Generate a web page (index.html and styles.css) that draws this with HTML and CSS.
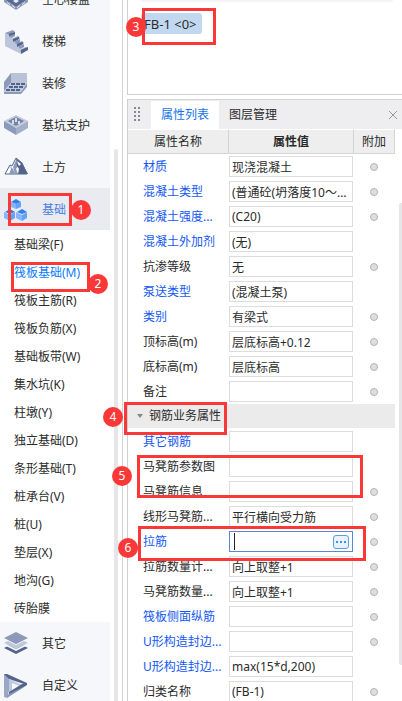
FILE: index.html
```
<!DOCTYPE html>
<html lang="zh-CN">
<head>
  <meta charset="UTF-8" />
  <meta name="viewport" content="width=device-width, initial-scale=1.0" />
  <title>属性列表</title>
  <link rel="stylesheet" href="styles.css">
</head>
<body>
  <div class="app">
    <nav class="sidebar">
      <div class="nav-list">
        <button class="nav-item">
          <svg class="icon" viewBox="0 0 24 24"><path fill="#8c9aba" d="M0 11l12 8 12-8v3l-12 8-12-8z"/><path fill="#5a6c94" d="M12 3l12 8-12 8-12-8z"/><path fill="#e6eaf2" d="M12 5l3 2-3 2-3-2zM7 8l3 2-3 2-3-2zM17 8l3 2-3 2-3-2zM12 11l3 2-3 2-3-2zM3 14l3 2v1l-3-2zM8 17l3 2v1l-3-2zM21 14l-3 2v1l3-2zM16 17l-3 2v1l3-2z"/></svg>
          空心楼盖
        </button>
        <button class="nav-item">
          <svg class="icon" viewBox="0 0 24 24"><path fill="#bcc5d9" d="M1 3l4 2 4 4 4 3 3 4 1 8L1 16z"/><path fill="#8c9aba" d="M1 3l8-3 2 2-6 3zM5 5l6-2v3L8 8 5 7zM8 9l6-3 2 2-5 3zM11 11l5-2v3l-3 2-2-1zM12 14l6-3 2 2-5 3zM15 16l5-2v3l-3 2-2-1zM16 20l6-3 2 2-7 3z"/><path fill="#52648c" d="M5 4l6-2v2L5 6zM9 9l6-2v2l-6 3zM13 14l6-2v2l-6 3zM17 20l7-3v3l-7 4z"/></svg>
          楼梯
        </button>
        <button class="nav-item">
          <svg class="icon" viewBox="0 0 24 24"><path fill="#b9c2d7" d="M7 1h16v10H7z"/><path fill="#8c9aba" d="M7 1v10L0 19v-9z"/><path fill="#c0c8db" d="M7 11h16l-6 9H0v-1z"/><path fill="#8c9aba" d="M23 11v4l-6 7H0v-2h17z"/><path stroke="#52648c" stroke-width="2" stroke-dasharray="4 1" d="M7 12h14M5 15h14M2 18h15"/></svg>
          装修
        </button>
        <button class="nav-item">
          <svg class="icon" viewBox="0 0 24 24"><path fill="#c3cadc" d="M12 1l12 6-12 7L0 7z"/><path fill="#8c9aba" d="M0 7l12 7v7L0 14z"/><path fill="#a4afc9" d="M24 7l-12 7v7l12-7z"/><path fill="#7484a9" d="M12 3l8 4-8 5-8-5z"/><path stroke="#d7dce8" stroke-width="2" d="M9 6v4M12 4v4M15 7v3"/></svg>
          基坑支护
        </button>
        <button class="nav-item">
          <svg class="icon" viewBox="0 0 24 24"><path fill="#fff" stroke="#52648c" d="M1 18l5-9 2 1 4-8 6 5 5 11z"/><path fill="#8c9aba" d="M6 10l3 3 2 5H5l2-5zM12 4l2 6-2 3 2 5h-3l-2-7z"/><path fill="#52648c" d="M12 2l6 5 6 11H14l1-5-2-3z"/><path fill="#fff" d="M13 5l4 3-2 2-1-2z"/></svg>
          土方
        </button>
        <button class="nav-item active">
          <svg class="icon" viewBox="0 0 24 24"><path fill="#2f7ff2" d="M12 1l5 3-5 2-5-2z"/><path fill="#83b6ff" d="M7 4l5 2v5l-5-2z"/><path fill="#64a2fb" d="M17 4l-5 2v5l5-2z"/><path fill="#2f7ff2" d="M6 11l5 3-5 2-5-2z"/><path fill="#83b6ff" d="M0 14l6 3v6l-6-3z"/><path fill="#64a2fb" d="M11 14l-5 3v6l5-3z"/><path fill="#2f7ff2" d="M18 11l5 3-5 2-5-2z"/><path fill="#83b6ff" d="M12 14l6 3v6l-6-3z"/><path fill="#64a2fb" d="M23 14l-5 3v6l5-3z"/></svg>
          基础
        </button>
        <div class="sub-list">
          <button class="sub-item">基础梁(F)</button>
          <button class="sub-item selected">筏板基础(M)</button>
          <button class="sub-item">筏板主筋(R)</button>
          <button class="sub-item">筏板负筋(X)</button>
          <button class="sub-item">基础板带(W)</button>
          <button class="sub-item">集水坑(K)</button>
          <button class="sub-item">柱墩(Y)</button>
          <button class="sub-item">独立基础(D)</button>
          <button class="sub-item">条形基础(T)</button>
          <button class="sub-item">桩承台(V)</button>
          <button class="sub-item">桩(U)</button>
          <button class="sub-item">垫层(X)</button>
          <button class="sub-item">地沟(G)</button>
          <button class="sub-item">砖胎膜</button>
        </div>
        <button class="nav-item">
          <svg class="icon" viewBox="0 0 24 24"><path fill="#52648c" d="M12 10l12 6-12 6-12-6z"/><path fill="#f5f7fa" d="M0 11l12 6 12-6v2l-12 6-12-6z"/><path fill="#c0c8db" d="M12 5l12 6-12 6-12-6z"/><path fill="#f5f7fa" d="M0 6l12 6 12-6v1l-12 6-12-6z"/><path fill="#8c9aba" d="M12 0l12 6-12 6L0 6z"/></svg>
          其它
        </button>
        <button class="nav-item">
          <svg class="icon" viewBox="0 0 24 24"><path fill="#9ba8c5" d="M0 0l5 2v15l-2 7-3-1z"/><path fill="#52648c" d="M0 0h3l20 9v2L5 5z"/><path fill="#c0c8db" d="M5 5l13 6-2 1L8 9v9l-3 2z"/><path fill="#52648c" d="M23 9v2L7 21l-2-1v-2l13-8z"/><path fill="#8c9aba" d="M23 11L3 24v-3l4-2z"/></svg>
          自定义
        </button>
      </div>
    </nav>

    <div class="gutter"><span class="gutter-thumb"></span></div>

    <main class="main">
      <section class="components">
        <div class="search-edge"></div>
        <button class="chip">FB-1 &lt;0&gt;</button>
      </section>

      <section class="props">
        <div class="tab-bar">
          <span class="grip"></span>
          <button class="tab current">属性列表</button>
          <button class="tab">图层管理</button>
          <button class="close" aria-label="关闭">
            <svg viewBox="0 0 10 10" width="10" height="10"><path stroke="#999" d="M1 1l8 8M9 1L1 9"/></svg>
          </button>
        </div>
        <div class="props-body">
          <div class="table-wrap">
            <table class="prop-table">
              <thead>
                <tr><th class="col-name">属性名称</th><th class="col-value">属性值</th><th class="col-extra">附加</th></tr>
              </thead>
              <tbody>
                <tr><td class="name blue"><label for="p1">材质</label></td><td><input class="field" id="p1" value="现浇混凝土"></td><td class="extra"><input type="checkbox" class="dot" aria-label="附加 材质"></td></tr>
                <tr><td class="name blue"><label for="p2">混凝土类型</label></td><td><input class="field" id="p2" value="(普通砼(坍落度10～..."></td><td class="extra"><input type="checkbox" class="dot" aria-label="附加 混凝土类型"></td></tr>
                <tr><td class="name blue"><label for="p3">混凝土强度...</label></td><td><input class="field" id="p3" value="(C20)"></td><td class="extra"><input type="checkbox" class="dot" aria-label="附加 混凝土强度"></td></tr>
                <tr><td class="name blue"><label for="p4">混凝土外加剂</label></td><td><input class="field" id="p4" value="(无)"></td><td></td></tr>
                <tr><td class="name"><label for="p5">抗渗等级</label></td><td><input class="field" id="p5" value="无"></td><td class="extra"><input type="checkbox" class="dot" aria-label="附加 抗渗等级"></td></tr>
                <tr><td class="name blue"><label for="p6">泵送类型</label></td><td><input class="field" id="p6" value="(混凝土泵)"></td><td></td></tr>
                <tr><td class="name blue"><label for="p7">类别</label></td><td><input class="field" id="p7" value="有梁式"></td><td class="extra"><input type="checkbox" class="dot" aria-label="附加 类别"></td></tr>
                <tr><td class="name"><label for="p8">顶标高(m)</label></td><td><input class="field" id="p8" value="层底标高+0.12"></td><td class="extra"><input type="checkbox" class="dot" aria-label="附加 顶标高"></td></tr>
                <tr><td class="name"><label for="p9">底标高(m)</label></td><td><input class="field" id="p9" value="层底标高"></td><td class="extra"><input type="checkbox" class="dot" aria-label="附加 底标高"></td></tr>
                <tr><td class="name"><label for="p10">备注</label></td><td><input class="field" id="p10"></td><td class="extra"><input type="checkbox" class="dot" aria-label="附加 备注"></td></tr>
                <tr class="group"><td colspan="3"><button class="group-toggle"><span class="arrow"></span>钢筋业务属性</button></td></tr>
                <tr><td class="name blue"><label for="p11">其它钢筋</label></td><td><input class="field" id="p11"></td><td></td></tr>
                <tr><td class="name"><label for="p12">马凳筋参数图</label></td><td><input class="field" id="p12"></td><td></td></tr>
                <tr><td class="name"><label for="p13">马凳筋信息</label></td><td><input class="field" id="p13"></td><td class="extra"><input type="checkbox" class="dot" aria-label="附加 马凳筋信息"></td></tr>
                <tr><td class="name"><label for="p14">线形马凳筋...</label></td><td><input class="field" id="p14" value="平行横向受力筋"></td><td class="extra"><input type="checkbox" class="dot" aria-label="附加 线形马凳筋"></td></tr>
                <tr>
                  <td class="name blue"><label for="p15">拉筋</label></td>
                  <td><div class="field editing"><span class="caret"></span><input class="edit-input" id="p15"><button class="more" aria-label="更多"><svg viewBox="0 0 10 2" width="10" height="2"><path fill="#3f8ee0" d="M0 0h2v2H0zM4 0h2v2H4zM8 0h2v2H8z"/></svg></button></div></td>
                  <td class="extra"><input type="checkbox" class="dot" aria-label="附加 拉筋"></td>
                </tr>
                <tr><td class="name"><label for="p16">拉筋数量计...</label></td><td><input class="field" id="p16" value="向上取整+1"></td><td class="extra"><input type="checkbox" class="dot" aria-label="附加 拉筋数量"></td></tr>
                <tr><td class="name"><label for="p17">马凳筋数量...</label></td><td><input class="field" id="p17" value="向上取整+1"></td><td class="extra"><input type="checkbox" class="dot" aria-label="附加 马凳筋数量"></td></tr>
                <tr><td class="name blue"><label for="p18">筏板侧面纵筋</label></td><td><input class="field" id="p18"></td><td class="extra"><input type="checkbox" class="dot" aria-label="附加 筏板侧面纵筋"></td></tr>
                <tr><td class="name blue"><label for="p19">U形构造封边...</label></td><td><input class="field" id="p19"></td><td class="extra"><input type="checkbox" class="dot" aria-label="附加 U形构造封边"></td></tr>
                <tr><td class="name blue"><label for="p20">U形构造封边...</label></td><td><input class="field" id="p20" value="max(15*d,200)"></td><td></td></tr>
                <tr><td class="name"><label for="p21">归类名称</label></td><td><input class="field" id="p21" value="(FB-1)"></td><td class="extra"><input type="checkbox" class="dot" aria-label="附加 归类名称"></td></tr>
              </tbody>
            </table>
          </div>
          <div class="scroll-track"><span class="scroll-thumb"></span></div>
        </div>
      </section>
    </main>

    <!-- step marks over the panels -->
    <div class="mark mark-1"></div><span class="step step-1">1</span>
    <div class="mark mark-2"></div><span class="step step-2">2</span>
    <div class="mark mark-3"></div><span class="step step-3">3</span>
    <div class="mark mark-4"></div><span class="step step-4">4</span>
    <div class="mark mark-5"></div><span class="step step-5">5</span>
    <div class="mark mark-6"></div><span class="step step-6">6</span>
  </div>
</body>
</html>
```

FILE: styles.css
```
* {
  box-sizing: border-box;
}

body {
  margin: 0;
  font-family: "Noto Sans", "Noto Sans CJK SC", sans-serif;
  font-size: 12px;
  line-height: 18px;
  color: #2b2b2b;
  background: #fff;
}

button,
input {
  font: inherit;
  color: inherit;
  margin: 0;
  padding: 0;
  border: none;
  background: none;
  outline: none;
}

button {
  cursor: pointer;
  text-align: left;
}

.app {
  position: relative;
  display: flex;
  height: 100vh;
  overflow: hidden;
}

/* sidebar */
.sidebar {
  width: 110px;
  flex: none;
  overflow: hidden;
  background: #f5f7fa;
}

/* list is scrolled by half a row */
.nav-list {
  display: flex;
  flex-direction: column;
  margin-top: -22px;
}

.nav-item {
  display: flex;
  align-items: center;
  gap: 14px;
  height: 42px;
  padding: 2px 0 0 4px;
}

.nav-item.active {
  background: #e9ebf0;
  color: #4a7ee0;
}

.icon {
  width: 24px;
  height: 24px;
  flex: none;
}

.sub-list {
  display: flex;
  flex-direction: column;
  background: #fff;
}

.sub-item {
  height: 28px;
  padding: 2px 0 0 14px;
}

.sub-item.selected {
  color: #0a7cff;
}

.gutter {
  width: 13px;
  flex: none;
  padding: 149px 0 0 4px;
  border-right: 1px solid #d4d4d6;
}

.gutter-thumb {
  display: block;
  width: 4px;
  height: 100%;
  border-radius: 2px 2px 0 0;
  background: #e6e6e8;
}

/* right side */
.main {
  flex: 1;
  min-width: 0;
  display: flex;
  flex-direction: column;
  gap: 4px;
  padding-left: 4px;
}

.components {
  flex: none;
  height: 95px;
  padding: 0 9px 0 13px;
  border-left: 1px solid #d0d0d2;
  border-bottom: 1px solid #d0d0d2;
}

.search-edge {
  height: 2px;
  margin-bottom: 11px;
  border-radius: 0 0 8px 8px;
  background: #f4f4f5;
}

.chip {
  height: 21px;
  padding: 0 5px 0 3px;
  border-radius: 3px;
  font-size: 13px;
  background: #c1d8f0;
}

.props {
  flex: 1;
  min-height: 0;
  border-left: 1px solid #d0d0d2;
}

.tab-bar {
  display: flex;
  align-items: center;
  height: 30px;
  border-top: 1px solid #d4d4d6;
  background: #eeeef1;
}

.grip {
  width: 8px;
  height: 16px;
  margin: 0 9px 0 6px;
  background-image: linear-gradient(transparent 2px, #eeeef1 2px), linear-gradient(to right, #8a8a8e 2px, #eeeef1 2px);
  background-size: 4px 4px;
}

.tab {
  height: 28px;
  padding: 0 10px;
}

.tab.current {
  background: #fff;
  color: #1473e6;
}

.close {
  display: flex;
  margin-left: auto;
  padding-right: 4px;
}

.props-body {
  display: flex;
}

/* property table */
.table-wrap {
  flex: 1;
  min-width: 0;
}

.prop-table {
  width: 100%;
  table-layout: fixed;
  border-collapse: separate;
  border-spacing: 0;
}

.prop-table th {
  height: 25px;
  padding: 0;
  font-weight: normal;
  white-space: nowrap;
  background: #eee;
  border: 1px solid #d4d4d6;
  border-width: 1px 1px 1px 0;
  border-top-color: #fff;
}

.prop-table .col-name {
  width: 101px;
}

.prop-table .col-value {
  font-weight: bold;
}

.prop-table .col-extra {
  width: 41px;
}

.prop-table td {
  height: 25px;
  padding: 0 1px 0 0;
}

.prop-table .name {
  padding-left: 15px;
  white-space: nowrap;
}

.blue {
  color: #1457f5;
}

.field {
  display: block;
  width: 100%;
  height: 21px;
  padding: 0 2px;
  border: 1px solid #dcdcde;
  background: #fff;
}

.editing {
  display: flex;
  align-items: center;
  padding: 0 3px 0 4px;
  border-color: #5a86d4;
}

.edit-input {
  flex: 1;
  min-width: 0;
}

.caret {
  width: 1px;
  height: 17px;
  background: #222;
}

.more {
  display: flex;
  align-items: center;
  justify-content: center;
  width: 16px;
  height: 14px;
  border: 1px solid #5aa0e6;
  border-radius: 3px;
  background: #eaf3fc;
}

.dot {
  appearance: none;
  display: block;
  width: 8px;
  height: 8px;
  margin: 0 auto;
  border: 1px solid #b4b4b8;
  border-radius: 50%;
  background: #dedee2;
}

.group td {
  border-bottom: 1px solid #fff;
  background: #ebebeb;
}

.group-toggle {
  display: flex;
  align-items: center;
  gap: 6px;
  padding-left: 9px;
}

.arrow {
  border: 3px solid transparent;
  border-top: 4px solid #888;
  border-bottom: 0;
}

.scroll-track {
  width: 7px;
  flex: none;
  padding: 74px 0 0 4px;
}

.scroll-thumb {
  display: block;
  height: 462px;
  border-radius: 2px 0 0 2px;
  background: #e6e6e8;
}

/* step marks */
.mark {
  position: absolute;
  border: 3px solid #fb3838;
  pointer-events: none;
}

.step {
  position: absolute;
  width: 20px;
  height: 20px;
  border-radius: 50%;
  line-height: 20px;
  text-align: center;
  color: #fff;
  background: #fb3838;
}

.mark-1 { left: 8px; top: 193px; width: 64px; height: 33px; }
.mark-2 { left: 11px; top: 262px; width: 79px; height: 30px; }
.mark-3 { left: 142px; top: 8px; width: 74px; height: 37px; }
.mark-4 { left: 124px; top: 402px; width: 103px; height: 33px; }
.mark-5 { left: 137px; top: 455px; width: 226px; height: 43px; }
.mark-6 { left: 138px; top: 526px; width: 228px; height: 35px; }

.step-1 { left: 71px; top: 200px; }
.step-2 { left: 88px; top: 274px; }
.step-3 { left: 126px; top: 17px; }
.step-4 { left: 103px; top: 407px; }
.step-5 { left: 112px; top: 466px; }
.step-6 { left: 118px; top: 538px; }
```
